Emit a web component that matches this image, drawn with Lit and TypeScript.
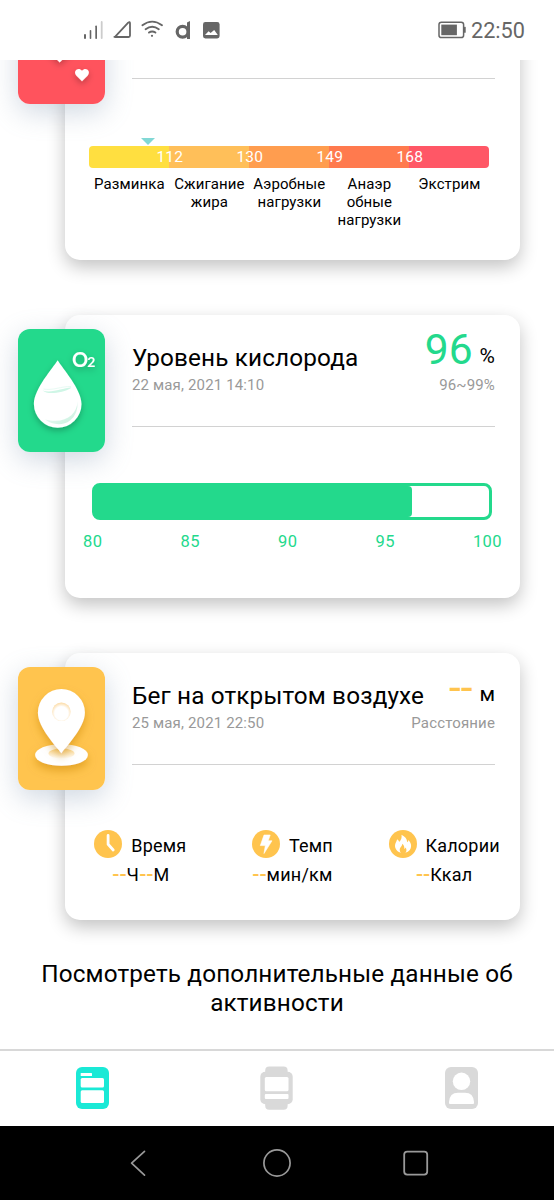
import { LitElement, html, css, svg } from "lit";
import { customElement, property } from "lit/decorators.js";

type Kind = "heart" | "oxygen" | "run";

@customElement("status-bar")
class StatusBar extends LitElement {
  static styles = css`
    :host {
      display: flex;
      align-items: center;
      justify-content: space-between;
      height: 60px;
      padding: 0 29px 0 80px;
      background: #fff;
      color: #666;
      flex: none;
    }
    .right {
      display: flex;
      align-items: center;
      gap: 5px;
    }
    .clock {
      font-size: 21.7px;
      line-height: 26px;
      padding-top: 2px;
      white-space: nowrap;
    }
    svg {
      display: block;
    }
  `;
  render() {
    return html`
      <svg width="145" height="60" viewBox="80 0 145 60" fill="none">
        <g fill="#666">
          <rect x="84" y="34" width="2" height="5" rx="1" />
          <rect x="89.7" y="30" width="1.6" height="9" rx=".8" />
          <rect x="95.3" y="25.5" width="1.7" height="13.5" rx=".8" />
          <rect x="100.8" y="21" width="1.8" height="18" rx=".9" fill="#ccc" />
        </g>
        <path d="M115 36.9L128.2 22.6Q130 21.2 130 23.4V35.6Q130 37 128.6 37H115.4Q113.6 37 115 36.9Z" stroke="#666" stroke-width="1.8" stroke-linejoin="round" />
        <g stroke="#666" stroke-width="1.9" stroke-linecap="round">
          <path d="M142.4 25.3Q152.2 18 162 25.3" />
          <path d="M145.6 29.2Q152.2 24.2 158.8 29.2" />
          <path d="M149 32.6Q152.2 30.3 155.4 32.6" />
        </g>
        <circle cx="152" cy="35.8" r="1.1" fill="#666" />
        <circle cx="182.6" cy="31.8" r="5.4" stroke="#666" stroke-width="3.2" />
        <path d="M187 22.6L190 21V39H187Z" fill="#666" />
        <rect x="203" y="22" width="16.6" height="16.4" rx="2.4" fill="#666" />
        <path d="M205 35L208.6 31.2L210.6 33L214.2 30L217.8 35Z" fill="#fff" />
      </svg>
      <div class="right">
        <svg width="28" height="18" viewBox="0 0 28 18">
          <rect x="1" y="1.2" width="24.6" height="15.4" rx="2.4" fill="none" stroke="#666" stroke-width="1.5" />
          <rect x="3.3" y="3.6" width="15.6" height="10.6" fill="#666" />
          <rect x="26" y="5.8" width="1.7" height="6" rx=".6" fill="#666" />
        </svg>
        <div class="clock">22:50</div>
      </div>
    `;
  }
}

@customElement("category-tile")
class CategoryTile extends LitElement {
  @property() kind: Kind = "heart";
  static styles = css`
    :host {
      display: block;
      width: 87px;
      height: 123px;
      border-radius: 12px;
      box-shadow: 0 8px 28px rgba(110, 135, 165, 0.32);
    }
    svg {
      display: block;
      border-radius: 12px;
    }
    .heart {
      background: #ff535d;
    }
    .oxygen {
      background: #23d98c;
    }
    .run {
      background: #ffc44e;
    }
    .formula {
      font-family: Lato, sans-serif;
      font-weight: 700;
      fill: #fff;
    }
  `;
  private art() {
    if (this.kind === "heart") {
      return svg`
        <g fill="#fff" filter="url(#sh)">
          <path d="M41.7 81.6L22 62C10 48 30 32 41.7 48C53 32 74 48 61 62Z" />
          <path d="M64 100.3L58.2 94.4C54.6 90.2 60.4 85.4 64 89.8C67.6 85.4 73.4 90.2 69.8 94.4Z" />
        </g>`;
    }
    if (this.kind === "oxygen") {
      return svg`
        <g filter="url(#sh)">
          <path d="M39.7 31.3C35 39 15.9 60 15.9 75A23.8 23.8 0 0 0 63.5 75C63.5 60 44 39 39.7 31.3Z" fill="#fff" />
          <text class="formula" x="54" y="37.5" font-size="20">O</text>
          <text class="formula" x="69.3" y="37.5" font-size="14">2</text>
        </g>
        <path d="M24.5 61.5C34 64.5 44 59 53.5 58.5C51 61 43 63.5 36 64Q28 64.5 24.5 61.5Z" fill="#cff6e6" />
        <path d="M25.5 60C34 62 44 57 53 57.5" fill="none" stroke="#e9fbf4" stroke-width="1" />
        <path d="M59.5 72C59 86 47 95.5 27 90.5C34 96 45 97 52 91.5Q60.5 85 59.5 72Z" fill="url(#shade)" />`;
    }
    return svg`
      <g filter="url(#deep)">
        <ellipse cx="43.5" cy="88" rx="26.4" ry="10.8" fill="#fff" />
      </g>
      <ellipse cx="43.5" cy="86.6" rx="13" ry="5" fill="url(#amber)" />
      <g filter="url(#deep)">
        <path d="M43.4 86.3C39 80 19.9 61 19.9 45.5A23.5 23.5 0 0 1 66.9 45.5C66.9 61 47.5 80 43.4 86.3Z" fill="#fff" />
      </g>
      <circle cx="43.4" cy="44.8" r="9.3" fill="url(#ring)" />`;
  }
  render() {
    return html`
      <svg class=${this.kind} width="87" height="123" viewBox="0 0 87 123">
        <defs>
          <filter id="sh" x="-30%" y="-30%" width="160%" height="160%">
            <feDropShadow dx="0" dy="3" stdDeviation="3" flood-color="#000" flood-opacity=".25" />
          </filter>
          <filter id="deep" x="-40%" y="-40%" width="180%" height="220%">
            <feDropShadow dx="0" dy="5" stdDeviation="4.5" flood-color="#c98500" flood-opacity=".5" />
          </filter>
          <linearGradient id="shade" x1="0" y1="0" x2="1" y2="1">
            <stop offset="0" stop-color="#fff" />
            <stop offset="1" stop-color="#c3f0dc" />
          </linearGradient>
          <linearGradient id="amber" x1="0" y1="0" x2="0" y2="1">
            <stop offset="0" stop-color="#fbd58c" />
            <stop offset="1" stop-color="#fff" />
          </linearGradient>
          <radialGradient id="ring" cx=".5" cy=".58" r=".6">
            <stop offset=".6" stop-color="#fff" />
            <stop offset="1" stop-color="#fbd699" />
          </radialGradient>
        </defs>
        ${this.art()}
      </svg>
    `;
  }
}

@customElement("metric-card")
class MetricCard extends LitElement {
  @property() kind: Kind = "heart";
  @property() heading = "";
  @property() date = "";
  @property() value = "";
  @property() unit = "";
  @property() note = "";
  static styles = css`
    :host {
      display: block;
      position: relative;
      box-sizing: border-box;
      margin: 0 34px 0 65px;
      background: #fff;
      border-radius: 15px;
      box-shadow: 0 7px 18px rgba(0, 0, 0, 0.24);
      flex: none;
    }
    .tile {
      position: absolute;
      left: -47px;
      top: 14px;
    }
    .head {
      box-sizing: border-box;
      height: 112px;
      margin: 0 25px 0 67px;
      padding-top: 28px;
      border-bottom: 1px solid #d2d2d2;
      white-space: nowrap;
    }
    .row {
      display: flex;
      justify-content: space-between;
    }
    .heading {
      font-size: 24.3px;
      line-height: 29px;
      letter-spacing: 0.15px;
      color: #000;
    }
    .reading {
      display: flex;
      align-items: flex-start;
      gap: 7px;
      height: 33px;
    }
    .value {
      font-size: 42.5px;
      line-height: 50px;
      margin-top: -18px;
    }
    .oxygen {
      color: #23d98c;
    }
    .run {
      color: #ffc44e;
    }
    .unit {
      font-size: 21px;
      line-height: 25px;
      padding-top: 1px;
      color: #000;
    }
    .date,
    .note {
      font-size: 15px;
      line-height: 18px;
      color: #999;
      letter-spacing: 0.15px;
    }
  `;
  render() {
    return html`
      <div class="head">
        <div class="row">
          <div class="heading">${this.heading}</div>
          <div class="reading">
            <span class="value ${this.kind}">${this.value}</span>
            <span class="unit">${this.unit}</span>
          </div>
        </div>
        <div class="row">
          <div class="date">${this.date}</div>
          <div class="note">${this.note}</div>
        </div>
      </div>
      <slot></slot>
      <category-tile class="tile" .kind=${this.kind}></category-tile>
    `;
  }
}

@customElement("pulse-zones")
class PulseZones extends LitElement {
  static styles = css`
    :host {
      display: block;
      width: 400px;
      height: 181px;
      margin-left: 24px;
      padding-top: 59px;
      box-sizing: border-box;
    }
    .marker {
      width: 0;
      height: 0;
      margin: 0 0 1px 51.5px;
      border: 7.5px solid transparent;
      border-top: 7px solid #81d8d5;
      border-bottom: 0;
    }
    .bar {
      display: grid;
      grid-template-columns: repeat(5, 80px);
      height: 22px;
      border-radius: 4px;
      overflow: hidden;
    }
    .limits {
      display: grid;
      grid-template-columns: repeat(4, 80px);
      justify-content: center;
      margin-top: -22px;
      padding-left: 1.5px;
      height: 22px;
      font-size: 15.5px;
      line-height: 22px;
      letter-spacing: 0.2px;
      color: #fff;
      text-align: center;
    }
    .z0 { background: #ffdf40; }
    .z1 { background: #ffbf59; }
    .z2 { background: #ff9d4f; }
    .z3 { background: #ff7a4e; }
    .z4 { background: #ff5766; }
    .names {
      display: grid;
      grid-template-columns: repeat(5, 80px);
      padding: 7px 0 0 0.4px;
      font-size: 15px;
      line-height: 18px;
      letter-spacing: 0.1px;
      color: #000;
      text-align: center;
      white-space: pre;
    }
  `;
  render() {
    const names = ["Разминка", "Сжигание\nжира", "Аэробные\nнагрузки", "Анаэр\nобные\nнагрузки", "Экстрим"];
    return html`
      <div class="marker"></div>
      <div class="bar">${names.map((_, i) => html`<div class="z${i}"></div>`)}</div>
      <div class="limits">${[112, 130, 149, 168].map((n) => html`<span>${n}</span>`)}</div>
      <div class="names">${names.map((n) => html`<span>${n}</span>`)}</div>
    `;
  }
}

@customElement("oxygen-gauge")
class OxygenGauge extends LitElement {
  static styles = css`
    :host {
      display: block;
      box-sizing: border-box;
      height: 171px;
      padding: 56px 18px 0;
    }
    .track {
      box-sizing: border-box;
      width: 400px;
      height: 37px;
      margin-left: 9px;
      border: 3px solid #23d98c;
      border-radius: 8px;
    }
    .fill {
      height: 100%;
      background: #23d98c;
      border-radius: 0 4px 4px 0;
    }
    .axis {
      display: flex;
      justify-content: space-between;
      padding-top: 12px;
      font-size: 16.5px;
      line-height: 20px;
      letter-spacing: 0.4px;
      color: #23d98c;
    }
  `;
  render() {
    const width = ((96 - 80) / 20) * 100 + 0.5;
    return html`
      <div class="track"><div class="fill" style="width:${width}%"></div></div>
      <div class="axis">${[80, 85, 90, 95, 100].map((n) => html`<span>${n}</span>`)}</div>
    `;
  }
}

@customElement("run-stats")
class RunStats extends LitElement {
  static styles = css`
    :host {
      display: grid;
      grid-template-columns: repeat(3, 1fr);
      box-sizing: border-box;
      height: 155px;
      padding-top: 65px;
      color: #000;
      font-size: 18px;
      line-height: 22px;
      white-space: nowrap;
    }
    .stat {
      display: flex;
      flex-direction: column;
      align-items: center;
      gap: 5px;
    }
    .label {
      display: flex;
      align-items: center;
      gap: 9px;
      height: 28px;
      letter-spacing: 0.2px;
    }
    .stat:first-child .label {
      margin-left: -1px;
    }
    .text {
      padding-top: 3px;
    }
    .amount {
      height: 22px;
      letter-spacing: 0.25px;
    }
    .dash {
      color: #ffc44e;
      font-size: 21px;
      font-weight: 500;
      letter-spacing: 0;
    }
  `;
  render() {
    const dash = html`<span class="dash">--</span>`;
    const clock = svg`<path d="M14.1 5.5V14.3L19.2 20" fill="none" stroke="#fff" stroke-width="2.8" stroke-linecap="round" stroke-linejoin="round" />`;
    const bolt = svg`<path d="M12 5H18.2L16.2 10.8H20L12 23.5L13.3 15.6H8.3Z" fill="#fff" stroke="#fff" stroke-width=".6" stroke-linejoin="round" />`;
    const flame = svg`<path d="M11.9 22.8C8.2 21.6 6 18.8 6 15.7C6 13 7.6 11.7 8.1 9.2C9.4 10 10 11 10.1 12C12.2 10.2 13 7.6 12.5 4.8C16 6.4 18 9 18.2 12.2C19 11.6 19.3 10.8 19.3 9.9C21.4 12 22.1 14 22.1 16C22.1 19.2 20 21.8 16.4 22.8C18 20.8 17.6 18.8 16.5 17.4C16.2 18.2 15.9 18.5 15.3 18.8C15.5 16.7 14.9 14.9 13.2 13.8C13.3 16.4 10.7 17.3 10.7 20Q10.7 21.8 11.9 22.8Z" fill="#fff" />`;
    const stats = [
      { icon: clock, label: "Время", amount: html`${dash}Ч${dash}М` },
      { icon: bolt, label: "Темп", amount: html`${dash}мин/км` },
      { icon: flame, label: "Калории", amount: html`${dash}Ккал` },
    ];
    return stats.map(
      (s) => html`<div class="stat">
        <div class="label">
          <svg width="28" height="28" viewBox="0 0 28 28"><circle cx="14" cy="14" r="14" fill="#ffc44e" />${s.icon}</svg>
          <span class="text">${s.label}</span>
        </div>
        <div class="amount">${s.amount}</div>
      </div>`
    );
  }
}

@customElement("bottom-tabs")
class BottomTabs extends LitElement {
  static styles = css`
    :host {
      display: grid;
      grid-template-columns: repeat(3, 1fr);
      place-items: center;
      box-sizing: border-box;
      height: 77px;
      padding-bottom: 1px;
      border-top: 2px solid #d8d8d8;
      background: #fff;
      flex: none;
    }
    svg {
      display: block;
    }
  `;
  render() {
    return html`
      <svg width="33" height="44" viewBox="0 0 33 44">
        <rect y="1" width="33" height="42" rx="6" fill="#1ae9d6" />
        <g fill="#fff">
          <rect x="4.7" y="7" width="11.3" height="3" rx=".5" />
          <rect x="4.7" y="12" width="23.3" height="9.5" rx="1.5" />
          <rect x="4.7" y="24.3" width="23.3" height="12.7" rx="1.5" />
        </g>
      </svg>
      <svg width="33" height="44" viewBox="0 0 33 44">
        <rect x="5.2" y=".6" width="22.4" height="43.2" rx="4" fill="#d9d9d9" />
        <rect x=".3" y="5.7" width="32.4" height="32.6" rx="5" fill="#d9d9d9" />
        <rect x="4.8" y="11" width="23.7" height="14.3" rx="1.5" fill="#fff" />
        <rect x="4.8" y="28" width="23.7" height="5" rx="1" fill="#fff" />
      </svg>
      <svg width="33" height="44" viewBox="0 0 33 44">
        <rect y="1" width="33" height="42" rx="6" fill="#d9d9d9" />
        <circle cx="16.5" cy="15.3" r="8.7" fill="#fff" />
        <path d="M4 37V36Q4.5 26.7 13 26.7H20Q28.5 26.7 29 36V37Q29 38 28 38H5Q4 38 4 37Z" fill="#fff" />
      </svg>
    `;
  }
}

@customElement("system-nav")
class SystemNav extends LitElement {
  static styles = css`
    :host {
      display: grid;
      grid-template-columns: repeat(3, 1fr);
      place-items: center;
      box-sizing: border-box;
      height: 74px;
      padding: 0 69px;
      background: #000;
      flex: none;
    }
    svg {
      display: block;
    }
  `;
  render() {
    return html`
      <svg width="30" height="30" viewBox="0 0 30 30" fill="none" stroke="#999" stroke-width="1.7"><path d="M21.5 3.3L8.6 15.2L21.5 27.2" stroke-linejoin="round" stroke-linecap="round" /></svg>
      <svg width="30" height="30" viewBox="0 0 30 30" fill="none" stroke="#999" stroke-width="1.7"><circle cx="15" cy="15" r="13.1" /></svg>
      <svg width="30" height="30" viewBox="0 0 30 30" fill="none" stroke="#999" stroke-width="1.8"><rect x="3.2" y="3.6" width="23" height="23" rx="3" /></svg>
    `;
  }
}

@customElement("app-root")
class AppRoot extends LitElement {
  static styles = css`
    :host {
      display: flex;
      flex-direction: column;
      height: 1200px;
      overflow: hidden;
      background: #fff;
      font-family: Roboto, "Noto Sans", sans-serif;
    }
    .feed {
      display: flex;
      flex-direction: column;
      justify-content: flex-end;
      flex: 1;
      min-height: 0;
      gap: 55px;
      overflow: hidden;
    }
    .more {
      box-sizing: border-box;
      height: 91px;
      margin-top: -17px;
      padding-top: 1px;
      text-align: center;
      font-size: 24.3px;
      line-height: 29px;
      letter-spacing: 0.15px;
      color: #000;
      flex: none;
    }
  `;
  render() {
    return html`
      <status-bar></status-bar>
      <main class="feed">
        <metric-card kind="heart"><pulse-zones></pulse-zones></metric-card>
        <metric-card
          kind="oxygen"
          heading="Уровень кислорода"
          date="22 мая, 2021 14:10"
          value="96"
          unit="%"
          note="96~99%"
          ><oxygen-gauge></oxygen-gauge
        ></metric-card>
        <metric-card
          kind="run"
          heading="Бег на открытом воздухе"
          date="25 мая, 2021 22:50"
          value="--"
          unit="м"
          note="Расстояние"
          ><run-stats></run-stats
        ></metric-card>
        <div class="more">Посмотреть дополнительные данные об<br />активности</div>
      </main>
      <bottom-tabs></bottom-tabs>
      <system-nav></system-nav>
    `;
  }
}
